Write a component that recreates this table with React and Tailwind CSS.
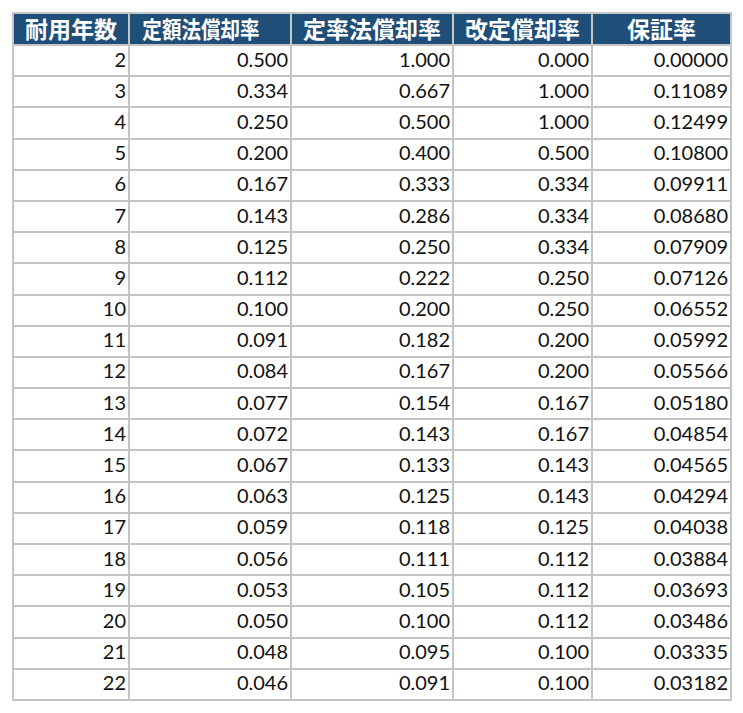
import React from "react";

const rows = [
  ["2", "0.500", "1.000", "0.000", "0.00000"],
  ["3", "0.334", "0.667", "1.000", "0.11089"],
  ["4", "0.250", "0.500", "1.000", "0.12499"],
  ["5", "0.200", "0.400", "0.500", "0.10800"],
  ["6", "0.167", "0.333", "0.334", "0.09911"],
  ["7", "0.143", "0.286", "0.334", "0.08680"],
  ["8", "0.125", "0.250", "0.334", "0.07909"],
  ["9", "0.112", "0.222", "0.250", "0.07126"],
  ["10", "0.100", "0.200", "0.250", "0.06552"],
  ["11", "0.091", "0.182", "0.200", "0.05992"],
  ["12", "0.084", "0.167", "0.200", "0.05566"],
  ["13", "0.077", "0.154", "0.167", "0.05180"],
  ["14", "0.072", "0.143", "0.167", "0.04854"],
  ["15", "0.067", "0.133", "0.143", "0.04565"],
  ["16", "0.063", "0.125", "0.143", "0.04294"],
  ["17", "0.059", "0.118", "0.125", "0.04038"],
  ["18", "0.056", "0.111", "0.112", "0.03884"],
  ["19", "0.053", "0.105", "0.112", "0.03693"],
  ["20", "0.050", "0.100", "0.112", "0.03486"],
  ["21", "0.048", "0.095", "0.100", "0.03335"],
  ["22", "0.046", "0.091", "0.100", "0.03182"],
];

export default function App() {
  return (
    <div className="bg-white w-[743px] h-[713px] pt-[12px] pl-[12px]">
      <table className="border-collapse table-fixed w-[718px] border-2 border-[#c4c4c4]">
        <colgroup>
          <col className="w-[116px]" />
          <col className="w-[162px]" />
          <col className="w-[162px]" />
          <col className="w-[139px]" />
          <col className="w-[139px]" />
        </colgroup>
        <thead>
          <tr className="h-[32px] bg-[#1f4e79]">
            {["耐用年数", "定額法償却率", "定率法償却率", "改定償却率", "保証率"].map((h, i) => (
              <th
                key={i}
                className="border-2 border-[#c4c4c4] p-0 text-center text-white font-bold text-[23px] leading-[30px] whitespace-nowrap [font-family:'Noto_Sans_CJK_JP','Noto_Sans',sans-serif]"
              >
                {i === 1 ? (
                  <span className="inline-block scale-x-[0.85] -translate-x-[9px] -translate-y-[1px]">{h}</span>
                ) : (
                  <span className="inline-block -translate-y-[1px]">{h}</span>
                )}
              </th>
            ))}
          </tr>
        </thead>
        <tbody>
          {rows.map((r, ri) => (
            <tr key={ri} className="h-[31.2px]">
              {r.map((c, ci) => (
                <td
                  key={ci}
                  className="border-2 border-[#c4c4c4] p-0 pr-[2px] text-right text-[20px] leading-none text-[#111] [font-family:Lato,'Liberation_Sans',sans-serif]"
                >
                  <span className="inline-block -translate-y-[2px]">{c}</span>
                </td>
              ))}
            </tr>
          ))}
        </tbody>
      </table>
    </div>
  );
}
